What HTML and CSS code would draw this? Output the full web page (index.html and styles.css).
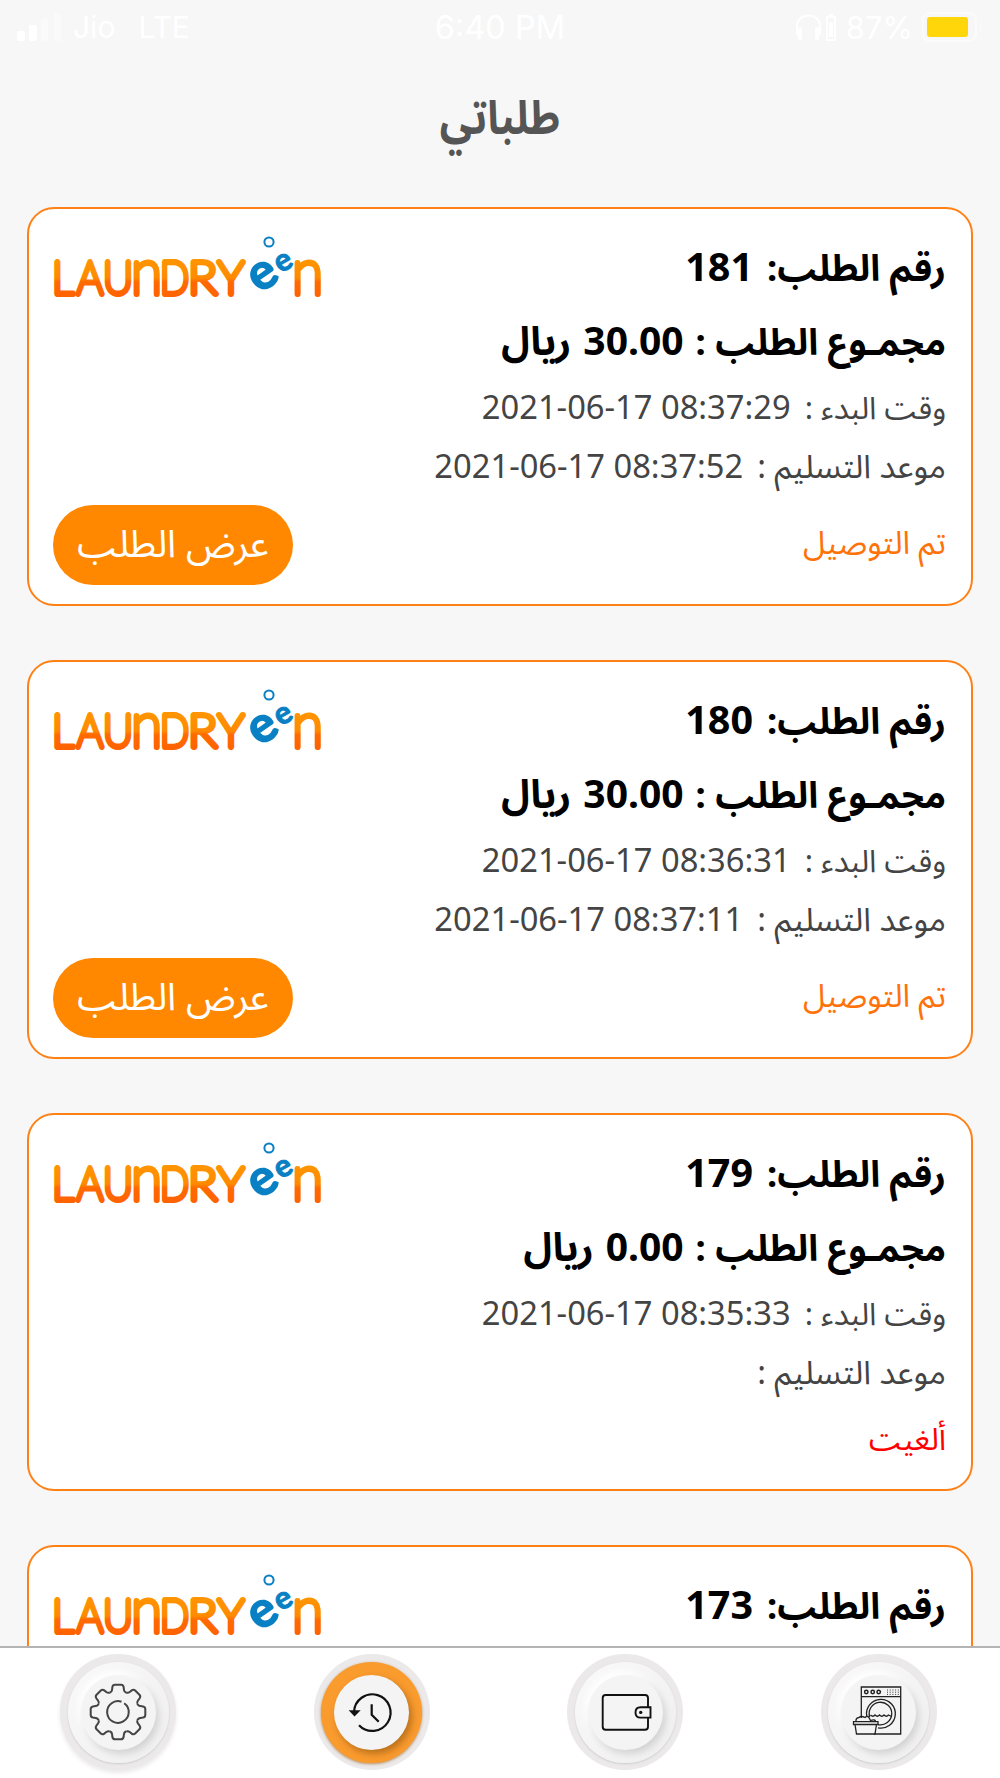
FILE: index.html
```html
<!DOCTYPE html>
<html lang="ar" dir="rtl">

<head>
    <meta charset="UTF-8">
    <meta name="viewport" content="width=device-width, initial-scale=1.0">
    <title>طلباتي</title>
    <link rel="stylesheet" href="styles.css">
</head>

<body>
    <!-- shared shapes -->
    <svg class="defs" width="0" height="0">
        <linearGradient id="orange" gradientUnits="userSpaceOnUse" x1="0" y1="29" x2="0" y2="67">
            <stop offset="0" stop-color="#ff9500" />
            <stop offset="0.5" stop-color="#ff8a00" />
            <stop offset="0.6" stop-color="#ff6a00" />
            <stop offset="1" stop-color="#ff6200" />
        </linearGradient>
        <path id="tooth" d="M-8.1-19.6Q-6.2-20-5.9-22.5L-5.6-25Q-5.2-27.3-3-27.3H3Q5.2-27.3 5.6-25L5.9-22.5Q6.2-20 8.1-19.6" />
    </svg>

    <header class="status" dir="ltr">
        <div class="carrier">
            <svg width="46" height="30" viewBox="0 0 46 30" fill="#fff">
                <rect x="1" y="19" width="8" height="10" rx="2" />
                <rect x="13" y="13" width="8" height="16" rx="2" />
                <rect x="25" y="7" width="7" height="22" rx="2" opacity=".35" />
                <rect x="38" y="1" width="7" height="28" rx="2" opacity=".35" />
            </svg>
            <span class="jio">Jio</span>
            <span>LTE</span>
        </div>
        <div class="clock">6:40 PM</div>
        <div class="power">
            <svg width="42" height="28" viewBox="0 0 42 28" fill="none" stroke="#fff" stroke-width="2">
                <path d="M2 22V13C2 -1 25 -1 25 13V22" />
                <path d="M5 16V25M22 16V25" stroke-width="4" stroke-linecap="round" />
                <path d="M32 4H40V27H32ZM34 2H38" />
                <path d="M36 9V24" stroke-width="4" />
            </svg>
            <span>87%</span>
            <svg width="62" height="30" viewBox="0 0 62 30">
                <rect x="1" y="1" width="53" height="28" rx="7" fill="none" stroke="#fbfbfb" stroke-width="2" />
                <rect x="5" y="5" width="41" height="20" rx="3" fill="#ffd60a" />
                <path d="M58 10Q62 15 58 20Z" fill="#fbfbfb" />
            </svg>
        </div>
    </header>

    <h1 class="title">طلباتي</h1>

    <main class="orders">
        <section class="card">
            <div class="info">
                <div class="row number"><span>رقم الطلب:</span><b>181</b></div>
                <div class="row total"><span>مجمـوع الطلب :</span><b>30.00</b><b>ريال</b></div>
                <div class="row start"><span>وقت البدء :</span><time dir="ltr">2021-06-17 08:37:29</time></div>
                <div class="row delivery"><span>موعد التسليم :</span><time dir="ltr">2021-06-17 08:37:52</time></div>
                <div class="state">تم التوصيل</div>
            </div>
            <div class="side">
                <svg class="logo" viewBox="0 0 275 75">
                    <text x="2" y="64" textLength="22" lengthAdjust="spacingAndGlyphs">L</text>
                    <text x="27" y="64" textLength="26" lengthAdjust="spacingAndGlyphs">A</text>
                    <text x="53" y="64" textLength="30" lengthAdjust="spacingAndGlyphs">U</text>
                    <text class="tall" x="81" y="64" textLength="31" lengthAdjust="spacingAndGlyphs">n</text>
                    <text x="110" y="64" textLength="29" lengthAdjust="spacingAndGlyphs">D</text>
                    <text x="138" y="64" textLength="29" lengthAdjust="spacingAndGlyphs">R</text>
                    <text x="168" y="64" textLength="26" lengthAdjust="spacingAndGlyphs">Y</text>
                    <circle cx="219" cy="12" r="4.6" />
                    <text class="bubble big" transform="translate(213 46) rotate(-35)" x="-13" y="13">e</text>
                    <text class="bubble" transform="translate(233.5 32.5) rotate(-30)" x="-8" y="8">e</text>
                    <text class="tall" x="242" y="64" textLength="31" lengthAdjust="spacingAndGlyphs">n</text>
                </svg>
                <button class="view">عرض الطلب</button>
            </div>
        </section>

        <section class="card">
            <div class="info">
                <div class="row number"><span>رقم الطلب:</span><b>180</b></div>
                <div class="row total"><span>مجمـوع الطلب :</span><b>30.00</b><b>ريال</b></div>
                <div class="row start"><span>وقت البدء :</span><time dir="ltr">2021-06-17 08:36:31</time></div>
                <div class="row delivery"><span>موعد التسليم :</span><time dir="ltr">2021-06-17 08:37:11</time></div>
                <div class="state">تم التوصيل</div>
            </div>
            <div class="side">
                <svg class="logo" viewBox="0 0 275 75">
                    <text x="2" y="64" textLength="22" lengthAdjust="spacingAndGlyphs">L</text>
                    <text x="27" y="64" textLength="26" lengthAdjust="spacingAndGlyphs">A</text>
                    <text x="53" y="64" textLength="30" lengthAdjust="spacingAndGlyphs">U</text>
                    <text class="tall" x="81" y="64" textLength="31" lengthAdjust="spacingAndGlyphs">n</text>
                    <text x="110" y="64" textLength="29" lengthAdjust="spacingAndGlyphs">D</text>
                    <text x="138" y="64" textLength="29" lengthAdjust="spacingAndGlyphs">R</text>
                    <text x="168" y="64" textLength="26" lengthAdjust="spacingAndGlyphs">Y</text>
                    <circle cx="219" cy="12" r="4.6" />
                    <text class="bubble big" transform="translate(213 46) rotate(-35)" x="-13" y="13">e</text>
                    <text class="bubble" transform="translate(233.5 32.5) rotate(-30)" x="-8" y="8">e</text>
                    <text class="tall" x="242" y="64" textLength="31" lengthAdjust="spacingAndGlyphs">n</text>
                </svg>
                <button class="view">عرض الطلب</button>
            </div>
        </section>

        <section class="card cancelled">
            <div class="info">
                <div class="row number"><span>رقم الطلب:</span><b>179</b></div>
                <div class="row total"><span>مجمـوع الطلب :</span><b>0.00</b><b>ريال</b></div>
                <div class="row start"><span>وقت البدء :</span><time dir="ltr">2021-06-17 08:35:33</time></div>
                <div class="row delivery"><span>موعد التسليم :</span></div>
                <div class="state">ألغيت</div>
            </div>
            <div class="side">
                <svg class="logo" viewBox="0 0 275 75">
                    <text x="2" y="64" textLength="22" lengthAdjust="spacingAndGlyphs">L</text>
                    <text x="27" y="64" textLength="26" lengthAdjust="spacingAndGlyphs">A</text>
                    <text x="53" y="64" textLength="30" lengthAdjust="spacingAndGlyphs">U</text>
                    <text class="tall" x="81" y="64" textLength="31" lengthAdjust="spacingAndGlyphs">n</text>
                    <text x="110" y="64" textLength="29" lengthAdjust="spacingAndGlyphs">D</text>
                    <text x="138" y="64" textLength="29" lengthAdjust="spacingAndGlyphs">R</text>
                    <text x="168" y="64" textLength="26" lengthAdjust="spacingAndGlyphs">Y</text>
                    <circle cx="219" cy="12" r="4.6" />
                    <text class="bubble big" transform="translate(213 46) rotate(-35)" x="-13" y="13">e</text>
                    <text class="bubble" transform="translate(233.5 32.5) rotate(-30)" x="-8" y="8">e</text>
                    <text class="tall" x="242" y="64" textLength="31" lengthAdjust="spacingAndGlyphs">n</text>
                </svg>
            </div>
        </section>

        <section class="card">
            <div class="info">
                <div class="row number"><span>رقم الطلب:</span><b>173</b></div>
            </div>
            <div class="side">
                <svg class="logo" viewBox="0 0 275 75">
                    <text x="2" y="64" textLength="22" lengthAdjust="spacingAndGlyphs">L</text>
                    <text x="27" y="64" textLength="26" lengthAdjust="spacingAndGlyphs">A</text>
                    <text x="53" y="64" textLength="30" lengthAdjust="spacingAndGlyphs">U</text>
                    <text class="tall" x="81" y="64" textLength="31" lengthAdjust="spacingAndGlyphs">n</text>
                    <text x="110" y="64" textLength="29" lengthAdjust="spacingAndGlyphs">D</text>
                    <text x="138" y="64" textLength="29" lengthAdjust="spacingAndGlyphs">R</text>
                    <text x="168" y="64" textLength="26" lengthAdjust="spacingAndGlyphs">Y</text>
                    <circle cx="219" cy="12" r="4.6" />
                    <text class="bubble big" transform="translate(213 46) rotate(-35)" x="-13" y="13">e</text>
                    <text class="bubble" transform="translate(233.5 32.5) rotate(-30)" x="-8" y="8">e</text>
                    <text class="tall" x="242" y="64" textLength="31" lengthAdjust="spacingAndGlyphs">n</text>
                </svg>
            </div>
        </section>
    </main>

    <nav class="tabs" dir="ltr">
        <a class="tab settings">
            <span class="ring"><span class="knob">
                <svg class="icon" viewBox="-30 -30 60 60" stroke="#444" stroke-width="2">
                    <use href="#tooth" />
                    <use href="#tooth" transform="rotate(45)" />
                    <use href="#tooth" transform="rotate(90)" />
                    <use href="#tooth" transform="rotate(135)" />
                    <use href="#tooth" transform="rotate(180)" />
                    <use href="#tooth" transform="rotate(225)" />
                    <use href="#tooth" transform="rotate(270)" />
                    <use href="#tooth" transform="rotate(315)" />
                    <path d="M6.2 -8.8A10.8 10.8 0 1 1 3.5 -10.2" />
                </svg>
            </span></span>
        </a>
        <a class="tab active">
            <span class="ring"><span class="knob">
                <svg class="icon" viewBox="-30 -30 60 60" stroke="#111" stroke-width="2.2">
                    <path d="M-18 0A18.3 18.3 0 1 1-13 13.2M-.3 -7.7V2.7L6.7 9.7" />
                    <path d="M-23.3 -1.7H-11.3L-17.5 4.4Z" fill="#111" stroke="none" />
                </svg>
            </span></span>
        </a>
        <a class="tab">
            <span class="ring"><span class="knob">
                <svg class="icon" viewBox="-30 -30 60 60" stroke="#111" stroke-width="1.9">
                    <path d="M23 -5V-14Q23 -17 20 -17H-19.3Q-22.3 -17-22.3 -14V14.7Q-22.3 17.7-19.3 17.7H20Q23 17.7 23 14.7V6" />
                    <path d="M25.5 -4.8V5.6H15.5Q10.5 5.6 10.5 .4T15.5 -4.8Z" />
                    <circle cx="15.7" cy=".4" r="1.7" fill="#111" stroke="none" />
                </svg>
            </span></span>
        </a>
        <a class="tab">
            <span class="ring"><span class="knob">
                <svg class="icon" viewBox="-30 -30 60 60" stroke="#222" stroke-width="1.3">
                    <path d="M-17.7 6V-25H21.7V22H-5M-17.7 -15.3H21.7" />
                    <g stroke-width="1.5">
                        <circle cx="-12.7" cy="-20" r="1.7" />
                        <circle cx="-6.3" cy="-20" r="1.7" />
                        <circle cx="-.3" cy="-20" r="1.7" />
                    </g>
                    <path d="M8 -22H20M8 -19.8H20M8 -17.6H20" stroke-width=".9" stroke-dasharray="1 1.7" />
                    <path d="M-12.3 4A14.4 14.4 0 1 1 -1 15.8M-9.3 5A11.3 11.3 0 1 1 -1 12.6" />
                    <path d="M-8.5 3Q-6 5.5-4 3Q-1.5 5.5 .5 3Q3 5.5 5 3Q7.5 5.5 9.5 3L12.5 4.5" />
                    <path d="M-23 9.5Q-23.5 6-20 5.5Q-18 3.5-14 5.5Q-11 3-9.5 6.5L-8.5 8.5Q-3.5 7-3.5 9.5" />
                    <path d="M-25.5 9.7H-1V12.5H-25.5ZM-24 12.5L-22.5 22H-4L-2.5 12.5" />
                </svg>
            </span></span>
        </a>
    </nav>
</body>

</html>
```
FILE: styles.css
```css
* {
    margin: 0;
    padding: 0;
    box-sizing: border-box;
}

body {
    display: flex;
    flex-direction: column;
    width: 1000px;
    height: 1778px;
    overflow: hidden;
    background-color: #f7f7f7;
    font-family: "Noto Sans", "Noto Sans Arabic", sans-serif;
    color: #000;
}

.defs {
    position: absolute;
}

/* status bar */
.status {
    display: grid;
    grid-template-columns: 1fr auto 1fr;
    align-items: center;
    height: 54px;
    flex: none;
    padding: 0 16px;
    font-family: Inter, sans-serif;
    font-size: 30px;
    color: #fff;
}

.carrier,
.power {
    display: flex;
    align-items: center;
}

.carrier {
    gap: 11px;
}

.jio {
    margin-right: 12px;
}

.clock {
    font-size: 32.5px;
}

.power {
    justify-content: flex-end;
    gap: 9px;
    font-size: 31px;
}

.title {
    flex: none;
    height: 153px;
    line-height: 125px;
    text-align: center;
    font-size: 47px;
    font-weight: 700;
    color: #555;
    transform: scaleX(0.87);
}

/* order list */
.orders {
    flex: 1;
    min-height: 0;
    overflow: hidden;
    padding: 0 27px;
}

.card {
    display: flex;
    justify-content: space-between;
    height: 399px;
    margin-bottom: 54px;
    padding: 20px 25px 19px 24px;
    border: 2px solid #ff8015;
    border-radius: 27px;
    background-color: #fff;
}

.cancelled {
    height: 378px;
}

.row {
    display: flex;
    align-items: baseline;
    white-space: pre;
    font-size: 32.7px;
    color: #444;
}

.row b {
    font-weight: 700;
}

.number {
    gap: 14px;
    line-height: 74px;
    height: 74px;
}

.number b {
    font-size: 39.5px;
}

.total {
    gap: 12px;
    line-height: 74px;
    height: 73px;
}

.total b {
    font-size: 39px;
}

.number,
.total {
    font-size: 36.5px;
    font-weight: 700;
    color: #000;
}

.start,
.delivery {
    gap: 14px;
    line-height: 61px;
    height: 59px;
}

.start span {
    font-size: 31px;
}

.state {
    margin-top: 18px;
    line-height: 60px;
    font-size: 32px;
    color: #ff720a;
}

.cancelled .state {
    margin-top: 8px;
    font-size: 31px;
    color: #f00;
}

.side {
    display: flex;
    flex-direction: column;
    justify-content: space-between;
    align-items: flex-end;
}

.logo {
    width: 275px;
    height: 75px;
    margin: 1px 0 0 -3px;
    overflow: visible;
    direction: ltr;
}

.logo text {
    font-family: Lato, sans-serif;
    font-size: 45.5px;
    font-weight: 100;
    fill: url(#orange);
    stroke: url(#orange);
    stroke-width: 5.8;
    stroke-linejoin: round;
}

.logo .tall {
    font-size: 62px;
}

.logo circle {
    fill: none;
    stroke: #0a80c4;
    stroke-width: 2;
}

.logo .bubble {
    font-size: 31px;
    font-weight: 700;
    fill: #0a80c4;
    stroke: #0a80c4;
    stroke-width: 1;
}

.logo .big {
    font-size: 50px;
    stroke-width: 1.5;
}

.view {
    width: 240px;
    height: 80px;
    padding-bottom: 4px;
    border: none;
    border-radius: 40px;
    background-color: #ff8800;
    font-family: inherit;
    font-size: 38px;
    color: #fff;
}

/* bottom tabs */
.tabs {
    display: flex;
    flex: none;
    justify-content: space-between;
    height: 132px;
    padding: 6px 63px 0 60px;
    border-top: 2px solid #b4b4b4;
    background-color: #fff;
}

.tab,
.ring,
.knob {
    display: flex;
    align-items: center;
    justify-content: center;
    border-radius: 50%;
}

.tab {
    width: 116px;
    height: 116px;
    background-color: #ebe9ea;
}

.ring {
    width: 101px;
    height: 101px;
    background: linear-gradient(135deg, #fafafa, #eee);
    box-shadow: 0 1px 2px #ccc;
}

.knob {
    width: 75px;
    height: 75px;
    background-color: #f4f4f4;
    box-shadow: 3px 4px 7px rgba(0, 0, 0, 0.13), -3px -4px 7px #fff;
}

.settings {
    box-shadow: 0 3px 4px #ebe9ea;
}

.active .ring {
    background: #fa9b2e;
    box-shadow: 0 1px 3px #b98a55;
}

.active .knob {
    box-shadow: 3px 4px 7px rgba(90, 50, 0, 0.4);
}

.icon {
    flex: none;
    width: 60px;
    height: 60px;
    fill: none;
}
```
